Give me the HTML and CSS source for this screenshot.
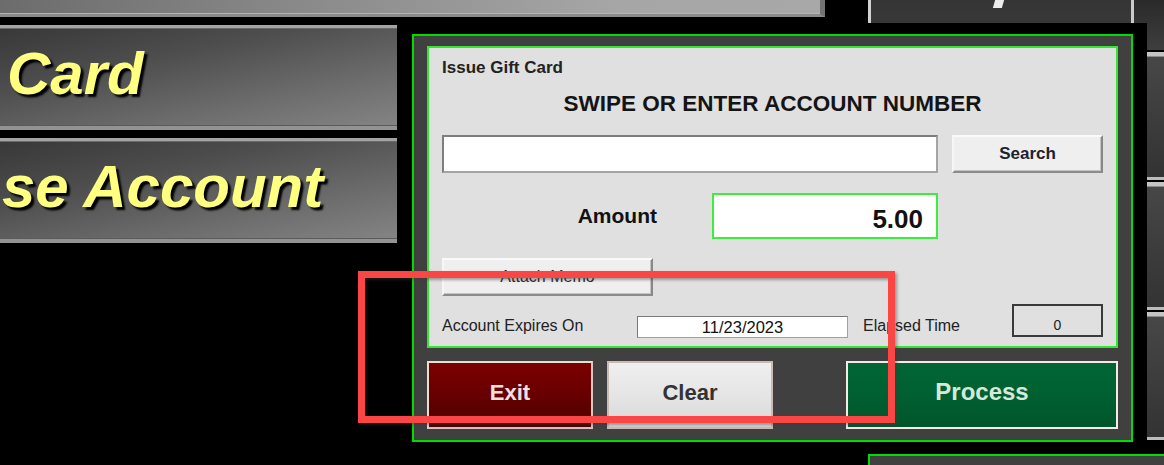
FILE: index.html
```html
<!DOCTYPE html>
<html>
<head>
<meta charset="utf-8">
<title>Issue Gift Card</title>
<link rel="stylesheet" href="styles.css">
</head>
<body>
<div class="screen">
  <div class="left-col">
    <div class="btn-top"></div>
    <div class="big-btn"><span class="big-label">Card</span></div>
    <div class="big-btn"><span class="big-label shifted">se Account</span></div>
  </div>
  <div class="right-col">
    <div class="rc-top">
      <div class="rc-btn-a"><span class="glyph-frag"></span></div>
      <div class="rc-btn-b"></div>
    </div>
    <div class="rc-btn first"></div>
    <div class="rc-btn"></div>
    <div class="rc-btn"></div>
    <div class="rc-bottom"></div>
  </div>
</div>

<div class="modal">
  <div class="frame">
    <div class="panel">
      <div class="title">Issue Gift Card</div>
      <div class="heading">SWIPE OR ENTER ACCOUNT NUMBER</div>
      <div class="search-row">
        <div class="acct-input"></div>
        <div class="win-btn search-btn">Search</div>
      </div>
      <div class="amount-row">
        <div class="amount-label">Amount</div>
        <div class="amount-input">5.00</div>
      </div>
      <div class="memo-row">
        <div class="win-btn memo-btn">Attach Memo</div>
      </div>
      <div class="info-row">
        <div class="info-label expires-label">Account Expires On</div>
        <div class="date-box">11/23/2023</div>
        <div class="info-label elapsed-label">Elapsed Time</div>
        <div class="elapsed-box">0</div>
      </div>
    </div>
    <div class="action-row">
      <div class="act-btn exit-btn">Exit</div>
      <div class="act-btn clear-btn">Clear</div>
      <div class="act-btn process-btn">Process</div>
    </div>
  </div>
</div>

<div class="annotation"></div>
</body>
</html>
```

FILE: styles.css
```css
* { box-sizing: border-box; }

html, body {
  margin: 0;
  padding: 0;
  background: #000;
}

body {
  width: 1164px;
  height: 465px;
  overflow: hidden;
  position: relative;
  font-family: "Liberation Sans", Arial, sans-serif;
}

.screen {
  display: flex;
  align-items: flex-start;
  height: 465px;
  overflow: hidden;
}

/* ---------- left column of background buttons ---------- */
.left-col {
  width: 825px;
  flex: none;
  display: flex;
  flex-direction: column;
  gap: 8px;
}

.btn-top {
  width: 825px;
  height: 17px;
  background: linear-gradient(90deg, #6c6c6c 0%, #8c8c8c 40%, #a6a6a6 75%, #a8a8a8 100%);
  border-bottom: 3px solid #8a8a8a;
  border-right: 5px solid #737373;
  box-shadow: inset 0 -1px 0 #b4b4b4;
}

.big-btn {
  width: 397px;
  height: 105px;
  display: flex;
  align-items: center;
  padding: 0 0 7px 7px;
  overflow: hidden;
  background: linear-gradient(168deg, #383838 0%, #4e4e4e 35%, #6c6c6c 70%, #848484 100%);
  border-top: 3px solid #a4a4a4;
  border-bottom: 4px solid #939393;
  box-shadow: inset 0 1px 0 #6a6a6a, inset 0 -1px 0 #5a5a5a;
}

.big-label {
  font-size: 60px;
  font-weight: bold;
  font-style: italic;
  color: #ffff80;
  white-space: nowrap;
  line-height: 70px;
  text-shadow: 3px 3px 2px #000;
}

.big-label.shifted {
  margin-left: -5px;
}

/* ---------- right column of background buttons ---------- */
.right-col {
  margin-left: 43px;
  width: 310px;
  flex: none;
  display: flex;
  flex-direction: column;
}

.rc-top {
  height: 50px;
  display: flex;
}

.rc-btn-a {
  width: 266px;
  height: 50px;
  display: flex;
  justify-content: center;
  padding-right: 6px;
  background: linear-gradient(180deg, #353535 0%, #3c3c3c 100%);
  border-left: 3px solid #d2d2d2;
  border-right: 3px solid #cacaca;
}

.glyph-frag {
  display: block;
  width: 9px;
  height: 8px;
  background: #ececec;
  transform: skewX(-16deg);
}

.rc-btn-b {
  flex: 1;
  height: 50px;
  background: linear-gradient(180deg, #2a2a2a 0%, #3e3e3e 100%);
}

.rc-btn {
  height: 128px;
  margin-top: 2px;
  background: linear-gradient(180deg, #474747 0%, #333 100%);
  border-top: 4px solid #c4c4c4;
  border-bottom: 3px solid #bdbdbd;
  box-shadow: inset 0 1px 0 #8a8a8a;
}

.rc-bottom {
  height: 40px;
  margin-top: 14px;
  background: #404040;
  border-top: 2px solid #00dc00;
  border-left: 2px solid #00dc00;
}

/* ---------- modal dialog ---------- */
.modal {
  position: absolute;
  left: 398px;
  top: 23px;
  width: 749px;
  height: 431px;
  background: #000;
  padding: 11px 14px 12px 14px;
}

.frame {
  height: 408px;
  border: 2px solid #00dc00;
  background: #404040;
  padding: 10px 13px 11px 13px;
  display: flex;
  flex-direction: column;
}

.panel {
  height: 302px;
  border: 2px solid #33e633;
  background: #e0e0e0;
  padding: 10px 13px 8px 13px;
  display: flex;
  flex-direction: column;
  color: #1c1c1c;
}

.title {
  height: 20px;
  line-height: 20px;
  font-size: 17px;
  font-weight: bold;
  color: #222;
}

.heading {
  margin-top: 13px;
  height: 26px;
  line-height: 26px;
  font-size: 22.5px;
  font-weight: bold;
  text-align: center;
  color: #141414;
}

.search-row {
  margin-top: 18px;
  height: 38px;
  display: flex;
  gap: 14px;
}

.acct-input {
  width: 496px;
  height: 38px;
  background: #fff;
  border: 2px solid;
  border-color: #7e7e7e #a4a4a4 #a4a4a4 #7e7e7e;
}

.win-btn {
  height: 38px;
  display: flex;
  align-items: center;
  justify-content: center;
  background: #efefef;
  border: 2px solid;
  border-color: #fafafa #888 #8c8c8c #f6f6f6;
  box-shadow: inset -1px -1px 0 #c4c4c4;
  color: #1e2230;
}

.search-btn {
  width: 151px;
  font-size: 17px;
  font-weight: bold;
}

.amount-row {
  margin-top: 20px;
  height: 46px;
  display: flex;
  align-items: center;
}

.amount-label {
  width: 270px;
  text-align: right;
  padding-right: 55px;
  font-size: 21px;
  font-weight: bold;
  line-height: 26px;
  color: #111;
}

.amount-input {
  width: 226px;
  height: 46px;
  background: #fff;
  border: 2px solid #3cee3c;
  padding: 6px 13px 0 0;
  line-height: 36px;
  font-size: 26px;
  font-weight: bold;
  text-align: right;
  color: #111;
}

.memo-row {
  margin-top: 19px;
  height: 38px;
  display: flex;
}

.memo-btn {
  width: 211px;
  font-size: 16px;
  color: #2a2a2a;
}

.info-row {
  margin-top: 8px;
  height: 34px;
  display: flex;
  align-items: flex-end;
}

.info-label {
  font-size: 16px;
  line-height: 22px;
  height: 22px;
  color: #222;
  margin-bottom: 1px;
}

.expires-label {
  width: 195px;
}

.date-box {
  width: 211px;
  height: 22px;
  background: #fff;
  border: 1px solid;
  border-color: #7a7a7a #a0a0a0 #a0a0a0 #7a7a7a;
  text-align: center;
  font-size: 16.5px;
  line-height: 20px;
  color: #111;
}

.elapsed-label {
  margin-left: 15px;
  width: 149px;
}

.elapsed-box {
  width: 91px;
  height: 33px;
  margin-bottom: 1px;
  background: #e0e0e0;
  border: 2px solid #3a3a3a;
  display: flex;
  align-items: center;
  justify-content: center;
  padding-top: 8px;
  font-size: 14px;
  color: #222;
}

/* ---------- action buttons ---------- */
.action-row {
  margin-top: 13px;
  height: 68px;
  display: flex;
  gap: 14px;
}

.act-btn {
  height: 68px;
  display: flex;
  align-items: center;
  justify-content: center;
  border: 2px solid;
  font-weight: bold;
  padding-bottom: 4px;
}

.exit-btn {
  width: 166px;
  background: linear-gradient(180deg, #7c0000 0%, #650000 55%, #4c0000 100%);
  border-color: #eedcd2 #dcc8c0 #d8c4bc #eedcd2;
  color: #f0e2e2;
  font-size: 22px;
}

.clear-btn {
  width: 166px;
  background: linear-gradient(180deg, #efefef 0%, #e4e4e4 55%, #d8d8d8 100%);
  border-color: #c9bbb2;
  color: #333;
  font-size: 22px;
}

.process-btn {
  width: 272px;
  margin-left: auto;
  background: linear-gradient(180deg, #006634 0%, #005f30 55%, #00562a 100%);
  border-color: #f4ece4;
  color: #d6e8da;
  font-size: 24px;
  padding-bottom: 6px;
}

/* ---------- red annotation overlay ---------- */
.annotation {
  position: absolute;
  left: 358px;
  top: 271px;
  width: 537px;
  height: 152px;
  border: 7px solid #fb4646;
  box-shadow: 2px 2px 3px rgba(60, 60, 60, 0.45), inset 2px 2px 3px rgba(60, 60, 60, 0.45);
}
```
